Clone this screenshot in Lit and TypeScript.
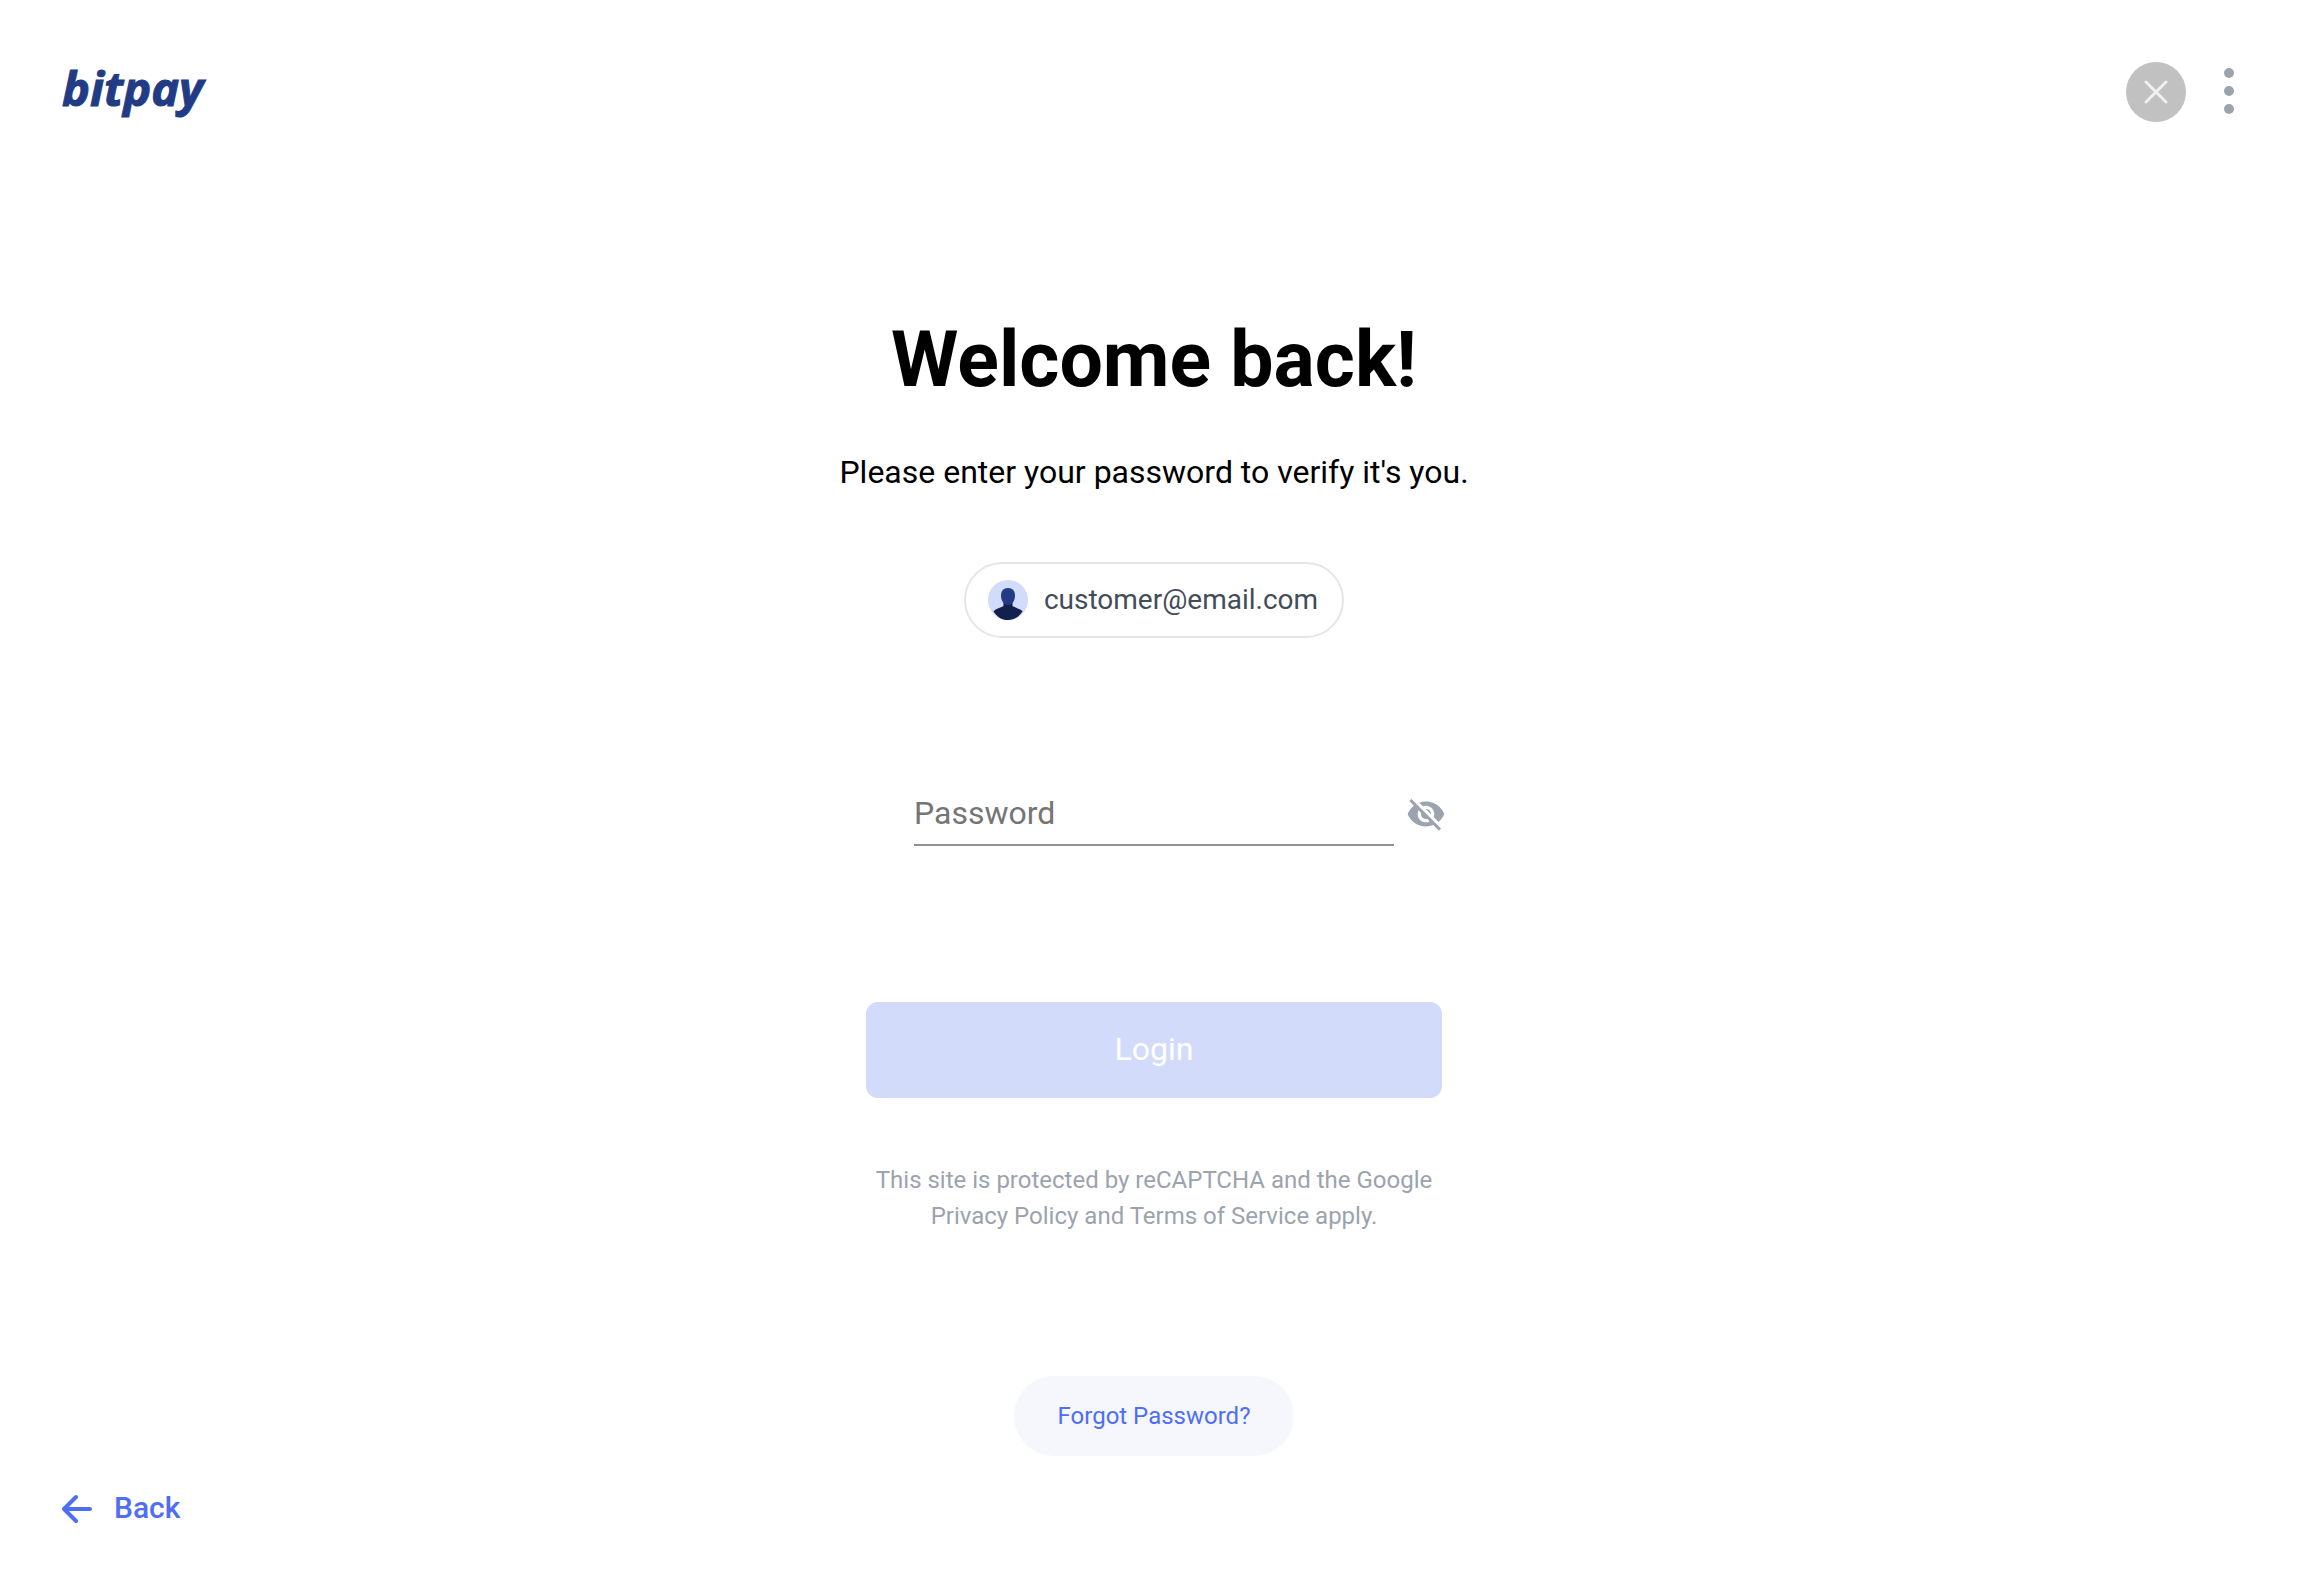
import { LitElement, html, css } from "lit";
import { customElement, state } from "lit/decorators.js";

@customElement("app-root")
export class AppRoot extends LitElement {
  @state() private password = "";
  @state() private revealed = false;

  static styles = css`
    :host {
      display: flex;
      flex-direction: column;
      min-height: 100vh;
      box-sizing: border-box;
      background: #ffffff;
      color: #000000;
      font-family: Roboto, "Liberation Sans", sans-serif;
    }
    button,
    input {
      font: inherit;
      margin: 0;
      padding: 0;
      border: 0;
      background: none;
    }
    button {
      cursor: pointer;
    }
    a {
      text-decoration: none;
    }
    svg {
      display: block;
    }
    .bar {
      display: flex;
      align-items: flex-start;
      justify-content: space-between;
      height: 60px;
      padding: 62px 56px 0 62px;
    }
    .logo {
      color: #213b85;
      font: italic 700 47px/52px "Open Sans", "Noto Sans", sans-serif;
      -webkit-text-stroke: 1px #213b85;
    }
    .actions {
      display: flex;
      align-items: center;
      gap: 28px;
    }
    .close {
      display: grid;
      place-items: center;
      width: 60px;
      height: 60px;
      border-radius: 50%;
      background: #c1c1c1;
    }
    .panel {
      display: flex;
      flex: 1;
      flex-direction: column;
      align-items: center;
      padding: 192px 0 0 8px;
      text-align: center;
    }
    h1 {
      margin: 0 0 44px;
      font-size: 77px;
      line-height: 92px;
      font-weight: 700;
    }
    .lead {
      margin: 0 0 68px;
      font-size: 32px;
      line-height: 44px;
    }
    .account {
      display: flex;
      align-items: center;
      gap: 16px;
      box-sizing: border-box;
      height: 76px;
      padding: 0 24px 0 22px;
      border: 2px solid #e6e6e6;
      border-radius: 38px;
      color: #434d5a;
      font-size: 28px;
      line-height: 36px;
    }
    form {
      display: flex;
      flex-direction: column;
      align-items: center;
      width: 576px;
      max-width: 100%;
      padding-top: 144px;
    }
    .field {
      display: grid;
      grid-template-columns: minmax(0, 1fr) 480px minmax(0, 1fr);
      align-items: center;
      width: 100%;
    }
    .field input {
      grid-column: 2;
      height: 62px;
      border-bottom: 2px solid #919191;
      border-radius: 0;
      outline: none;
      color: #000000;
      font-size: 32px;
      line-height: 44px;
    }
    .field input::placeholder {
      color: #757575;
      opacity: 1;
    }
    .eye {
      width: 40px;
      margin-left: 12px;
    }
    .login {
      width: 100%;
      height: 96px;
      margin-top: 156px;
      padding-bottom: 2px;
      border-radius: 12px;
      background: #d3dbfb;
      color: #ffffff;
      font-size: 32px;
    }
    .legal {
      margin: 64px 0 142px;
      color: #9ba3ae;
      font-size: 24px;
      line-height: 36px;
    }
    .legal a {
      color: inherit;
    }
    .forgot {
      height: 80px;
      padding: 0 44px;
      border-radius: 40px;
      background: #f5f7fd;
      color: #4f6ef7;
      font-size: 24px;
      line-height: 80px;
    }
    footer {
      padding: 30px 62px 46px;
    }
    .back {
      display: inline-flex;
      align-items: center;
      gap: 22px;
      color: #4f6ef7;
      font-size: 30px;
      line-height: 44px;
      font-weight: 500;
    }
  `;

  private onInput(e: InputEvent) {
    this.password = (e.target as HTMLInputElement).value;
  }

  render() {
    return html`
      <header class="bar">
        <a class="logo" href="#home">bitpay</a>
        <div class="actions">
          <button class="close" type="button" aria-label="Close">
            <svg width="24" height="24" viewBox="0 0 24 24" fill="none" stroke="#f0f0f0" stroke-width="3" stroke-linecap="round">
              <path d="M2 2 22 22M22 2 2 22" />
            </svg>
          </button>
          <button type="button" aria-label="More options">
            <svg width="30" height="60" viewBox="0 0 30 60" fill="#9ba3ae">
              <circle cx="15" cy="11" r="5" />
              <circle cx="15" cy="29" r="5" />
              <circle cx="15" cy="47" r="5" />
            </svg>
          </button>
        </div>
      </header>

      <main class="panel">
        <h1>Welcome back!</h1>
        <p class="lead">Please enter your password to verify it's you.</p>
        <div class="account">
          <svg width="40" height="40" viewBox="0 0 40 40" aria-hidden="true">
            <circle cx="20" cy="20" r="20" fill="#d3dbfb" />
            <path d="M15.500 22h9v4c3 2 7.500 2.500 10 5.200C31.500 36.500 26.500 40 20 40S8.500 36.500 5.500 31.200C8 28.500 12.500 28 15.500 26z" fill="#12214c" />
            <path d="M20 8c4.500 0 7 3 7 7.500S24.500 25 20 25s-7-5-7-9.500S15.500 8 20 8z" fill="#213b85" />
          </svg>
          <span>customer@email.com</span>
        </div>

        <form @submit=${(e: Event) => e.preventDefault()}>
          <div class="field">
            <input
              type=${this.revealed ? "text" : "password"}
              placeholder="Password"
              aria-label="Password"
              autocomplete="current-password"
              .value=${this.password}
              @input=${this.onInput}
            />
            <button
              class="eye"
              type="button"
              aria-label="Show password"
              aria-pressed=${this.revealed}
              @click=${() => (this.revealed = !this.revealed)}
            >
              <svg width="40" height="40" viewBox="0 0 24 24" fill="#9ba3ae">
                <path d="M12 7c2.760 0 5 2.240 5 5 0 .650-.130 1.260-.360 1.830l2.920 2.920c1.510-1.260 2.700-2.890 3.430-4.750-1.730-4.390-6-7.500-11-7.500-1.400 0-2.740.250-3.980.700l2.160 2.160C10.740 7.130 11.350 7 12 7zM2 4.270l2.280 2.280.460.460C3.080 8.300 1.780 10.020 1 12c1.730 4.390 6 7.500 11 7.500 1.550 0 3.030-.300 4.380-.840l.420.420L19.730 22 21 20.730 3.270 3 2 4.270zM7.530 9.800l1.550 1.550c-.050.210-.080.430-.080.650 0 1.660 1.340 3 3 3 .220 0 .440-.030.650-.080l1.550 1.550c-.670.330-1.410.530-2.200.530-2.760 0-5-2.240-5-5 0-.790.200-1.530.530-2.200zm4.310-.780l3.150 3.150.020-.160c0-1.660-1.340-3-3-3l-.170.010z" />
              </svg>
            </button>
          </div>
          <button class="login" type="submit">Login</button>
        </form>

        <p class="legal">
          This site is protected by reCAPTCHA and the Google<br />
          <a href="#privacy">Privacy Policy</a> and <a href="#terms">Terms of Service</a> apply.
        </p>
        <a class="forgot" href="#forgot">Forgot Password?</a>
      </main>

      <footer>
        <a class="back" href="#back">
          <svg width="30" height="30" viewBox="0 0 30 30" fill="none" stroke="#4f6ef7" stroke-width="4" stroke-linecap="round" stroke-linejoin="round" aria-hidden="true">
            <path d="M28 16H2M14 4 2 16 14 28" />
          </svg>
          <span>Back</span>
        </a>
      </footer>
    `;
  }
}
